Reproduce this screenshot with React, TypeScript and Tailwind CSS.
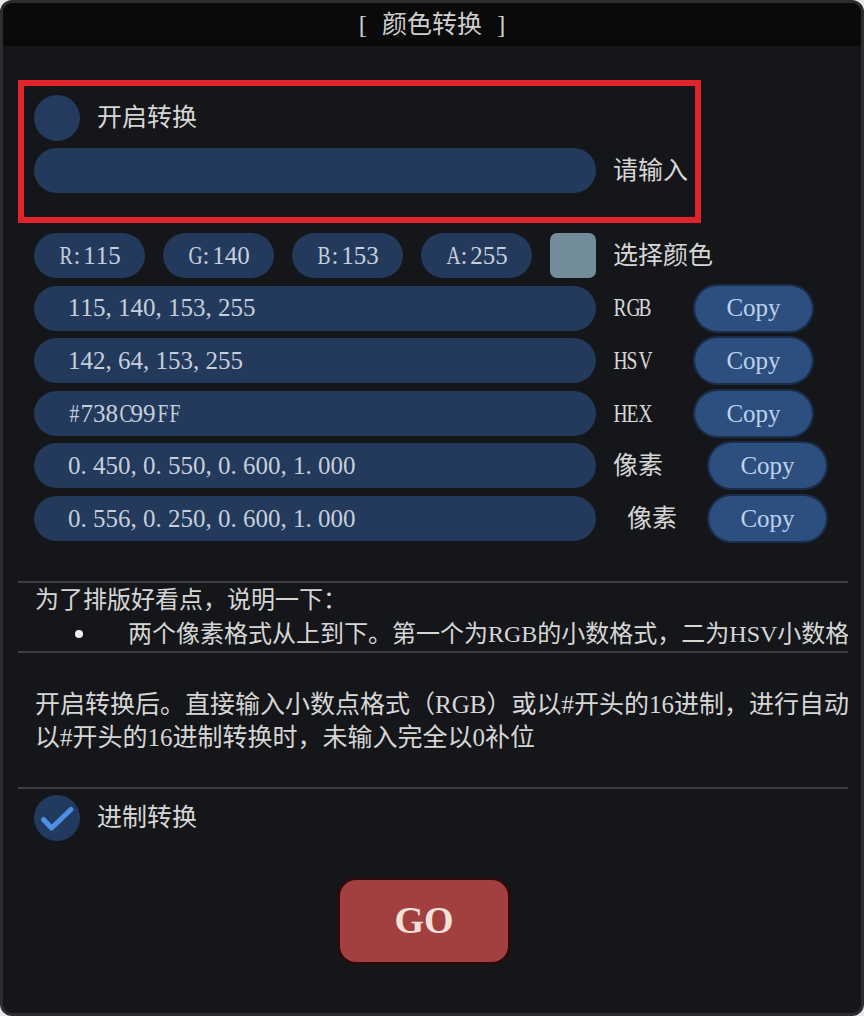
import React from "react";

const FONT = "font-['Liberation_Serif','Noto_Sans_CJK_SC',serif]";

function slotClass(c: string) {
  if (c === "." || c === ",") return "inline-block w-[12.5px] text-left";
  if (/[A-Z#]/.test(c)) return "inline-block w-[12.5px] text-center scale-x-[0.78]";
  return "inline-block w-[12.5px] text-center";
}

function Slots({ text }: { text: string }) {
  return (
    <span className="flex">
      {text.split("").map((c, i) => (
        <span key={i} className={slotClass(c)}>
          {c}
        </span>
      ))}
    </span>
  );
}

function Bar({ children }: { children?: React.ReactNode }) {
  return (
    <div className="flex h-full w-[562px] shrink-0 items-center rounded-full bg-[#233a5d] pl-[34px] text-[25px] text-[#c6cfdb]">
      {children}
    </div>
  );
}

function CopyBtn() {
  return (
    <button className="flex h-full w-[117px] shrink-0 items-center justify-center rounded-full bg-[#2c4f7f] text-[25px] text-[#bcd2ec] shadow-[0_0_0_2px_#1a2d4a]">
      Copy
    </button>
  );
}

type RowProps = { value: string; label: string; labelClass: string; latin?: boolean };

function ValueRow({ value, label, labelClass, latin }: RowProps) {
  return (
    <div className="flex h-[45px] items-center">
      <Bar>
        <Slots text={value} />
      </Bar>
      <div className={labelClass}>{latin ? <Slots text={label} /> : label}</div>
      <CopyBtn />
    </div>
  );
}

function Chip({ text }: { text: string }) {
  return (
    <div className="flex h-full w-[111px] shrink-0 items-center justify-center rounded-full bg-[#233a5d] text-[25px] text-[#c6cfdb]">
      <Slots text={text} />
    </div>
  );
}

function Separator() {
  return <div className="ml-[15px] h-[2px] w-[830px] bg-[#3c3e42]" />;
}

export default function App() {
  return (
    <div className={`h-[1016px] w-[864px] bg-[#e8e8e8] ${FONT}`}>
      <div className="flex h-full w-full flex-col overflow-hidden rounded-[12px] border-[3px] border-[#2c2d30] bg-[#151619]">
        {/* title bar */}
        <div className="flex h-[43px] shrink-0 items-center justify-center gap-[15px] bg-[#0a0a0b] text-[25px] text-[#cfcfcf]">
          <span>[</span>
          <span>颜色转换</span>
          <span>]</span>
        </div>

        {/* red highlighted box */}
        <div className="ml-[15px] mt-[34px] flex h-[143px] w-[683px] flex-col border-[6px] border-[#e1232b] pl-[10px] pt-[9px]">
          <div className="flex h-[46px] items-center">
            <div className="h-[46px] w-[46px] rounded-full bg-[#243b5f]" />
            <span className="ml-[17px] text-[25px] text-[#d6d6d6]">开启转换</span>
          </div>
          <div className="mt-[7px] flex h-[45px] items-center">
            <Bar />
            <span className="ml-[17px] text-[25px] text-[#d6d6d6]">请输入</span>
          </div>
        </div>

        {/* values */}
        <div className="ml-[31px] mt-[10px] flex flex-col gap-[7.6px]">
          <div className="flex h-[45px] items-center gap-[18px]">
            <Chip text="R:115" />
            <Chip text="G:140" />
            <Chip text="B:153" />
            <Chip text="A:255" />
            <div className="h-[45px] w-[46px] shrink-0 rounded-[7px] bg-[#738c99]" />
            <span className="-ml-[1px] text-[25px] text-[#d6d6d6]">选择颜色</span>
          </div>
          <ValueRow value="115,140,153,255" label="RGB" latin labelClass="w-[99px] shrink-0 pl-[16px] text-[25px] text-[#d6d6d6]" />
          <ValueRow value="142,64,153,255" label="HSV" latin labelClass="w-[99px] shrink-0 pl-[16px] text-[25px] text-[#d6d6d6]" />
          <ValueRow value="#738C99FF" label="HEX" latin labelClass="w-[99px] shrink-0 pl-[16px] text-[25px] text-[#d6d6d6]" />
          <ValueRow value="0.450,0.550,0.600,1.000" label="像素" labelClass="w-[113px] shrink-0 pl-[17px] text-[25px] text-[#d6d6d6]" />
          <ValueRow value="0.556,0.250,0.600,1.000" label="像素" labelClass="w-[113px] shrink-0 pl-[31px] text-[25px] text-[#d6d6d6]" />
        </div>

        {/* notes */}
        <div className="mt-[40px]">
          <Separator />
        </div>
        <div className="ml-[15px] w-[830px] overflow-hidden whitespace-nowrap pl-[17px] text-[24px] text-[#d6d6d6]">
          <div className="flex h-[35px] items-center">为了排版好看点，说明一下：</div>
          <div className="flex h-[33px] items-center">
            <span className="ml-[40px] h-[8px] w-[8px] shrink-0 rounded-full bg-[#f2f2f2]" />
            <span className="ml-[45px]">两个像素格式从上到下。第一个为RGB的小数格式，二为HSV小数格式</span>
          </div>
        </div>
        <Separator />

        <div className="ml-[15px] mt-[35px] w-[830px] overflow-hidden whitespace-nowrap pl-[17px] text-[25px] leading-[33px] text-[#d6d6d6]">
          <div>开启转换后。直接输入小数点格式（RGB）或以#开头的16进制，进行自动转换</div>
          <div>以#开头的16进制转换时，未输入完全以0补位</div>
        </div>

        <div className="mt-[33px]">
          <Separator />
        </div>

        {/* checkbox */}
        <div className="ml-[31px] mt-[6px] flex h-[46px] items-center">
          <svg width="46" height="46" viewBox="0 0 46 46" className="shrink-0">
            <circle cx="23" cy="23" r="23" fill="#213a5f" />
            <path d="M9.5 24.5 L17.5 33 L37 14.5" fill="none" stroke="#4f90e6" strokeWidth="5" strokeLinecap="round" strokeLinejoin="round" />
          </svg>
          <span className="ml-[17px] text-[25px] text-[#d6d6d6]">进制转换</span>
        </div>

        {/* GO */}
        <button className="ml-[337px] mt-[39px] flex h-[82px] w-[168px] items-center justify-center rounded-[16px] bg-[#a1403e] text-[38px] font-bold text-[#f6e0dc] shadow-[0_0_0_3px_#2a0c0c]">
          GO
        </button>
      </div>
    </div>
  );
}
